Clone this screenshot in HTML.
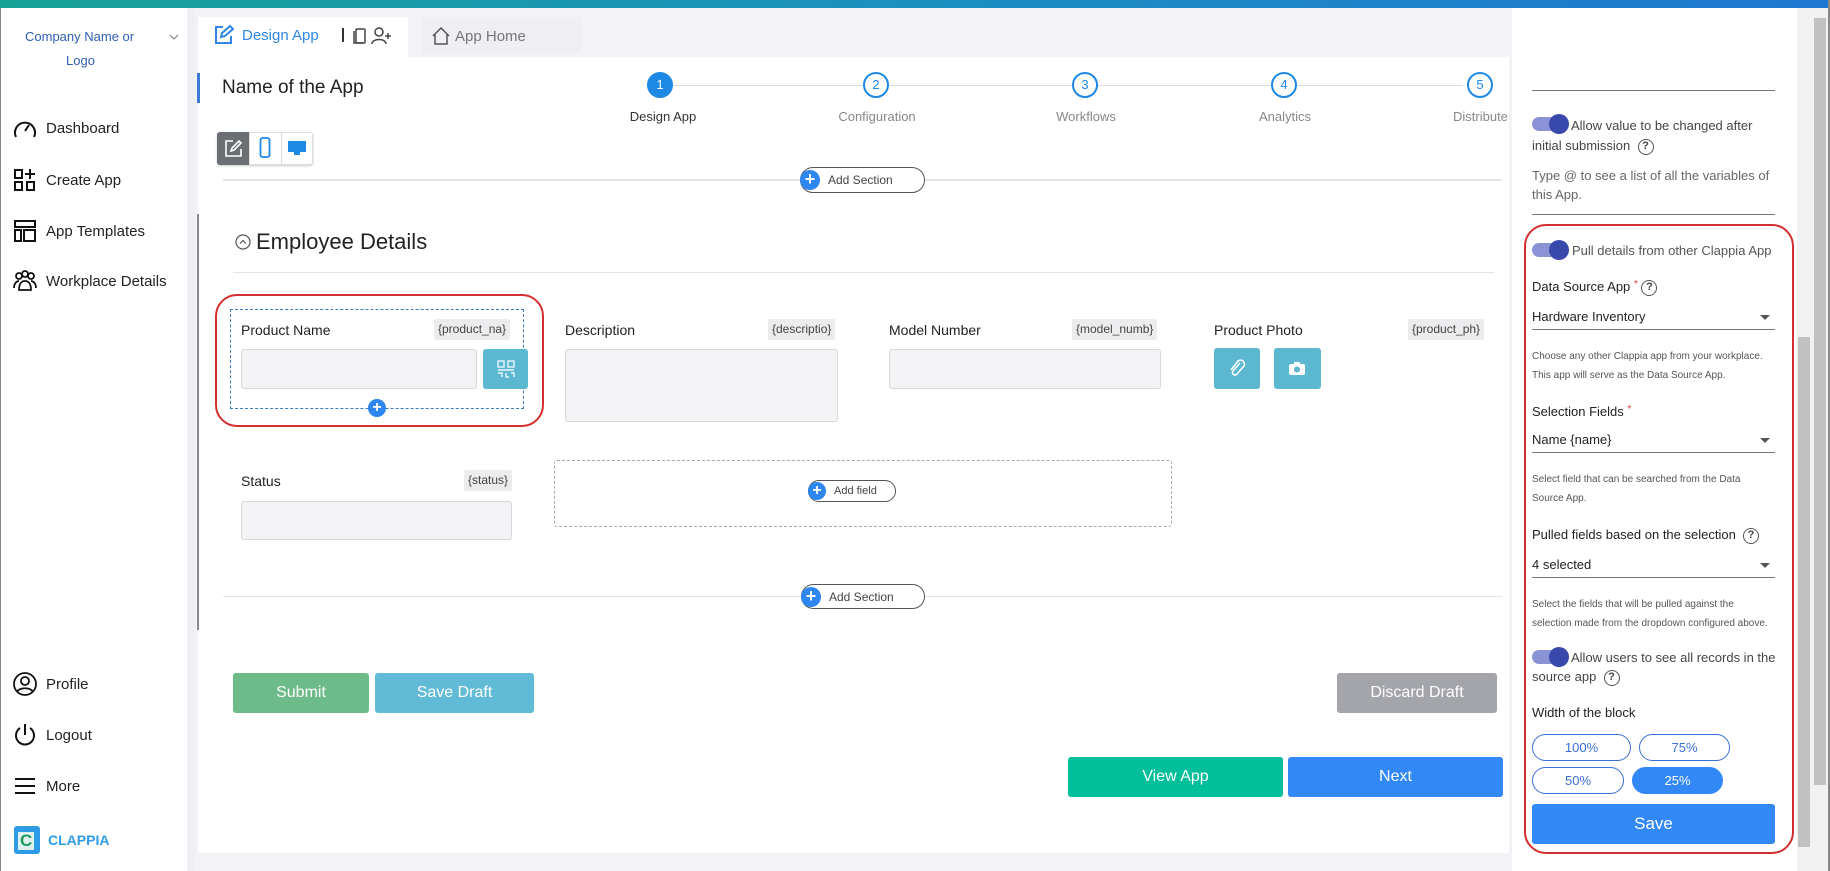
<!DOCTYPE html>
<html><head><meta charset="utf-8"><style>
*{box-sizing:border-box;margin:0;padding:0}
body{width:1830px;height:871px;overflow:hidden;position:relative;background:#f3f3f7;font-family:"Liberation Sans",Arial,sans-serif;color:#222}
.a{position:absolute}
.t{position:absolute;white-space:nowrap}
.nav{position:absolute;left:12px;font-size:15px;color:#222;display:flex;align-items:center}
.nav svg{width:26px;height:26px;margin-right:8px}
.tok{position:absolute;background:#ececee;color:#444;font-size:12px;height:21px;line-height:21px;padding:0 4px;border-radius:2px}
.inp{position:absolute;background:#f3f2f4;border:1px solid #d8d8db;border-radius:3px}
.lbl{position:absolute;font-size:14px;color:#222}
.btn{position:absolute;color:#fff;font-size:16px;text-align:center;border-radius:3px}
.pill{position:absolute;border:1px solid #555;border-radius:14px;background:#fff;font-size:12px;color:#444;display:flex;align-items:center}
.pill i{display:inline-block;width:20px;height:20px;border-radius:50%;background:#2e86f0;color:#fff;font-style:normal;font-weight:bold;font-size:18px;line-height:19px;text-align:center;margin:0 8px 0 -1px}
.step{position:absolute;width:26px;height:26px;border-radius:50%;border:2px solid #1e88e5;background:#fff;color:#1e88e5;font-size:13px;text-align:center;line-height:22px}
.slbl{position:absolute;font-size:13px;color:#888;transform:translateX(-50%);white-space:nowrap}
.tg{position:absolute;width:36px;height:14px;border-radius:7px;background:#8a93d6}
.tg:after{content:"";position:absolute;right:-1px;top:-3px;width:20px;height:20px;border-radius:50%;background:#3949ab}
.q{display:inline-block;width:16px;height:16px;border:1.5px solid #555;border-radius:50%;font-size:11px;text-align:center;line-height:13px;color:#444;font-weight:bold;vertical-align:middle}
.pt{position:absolute;left:1532px;font-size:13px;color:#222}
.hp{position:absolute;left:1532px;font-size:10px;color:#555;line-height:19px}
.ul{position:absolute;left:1532px;width:243px;height:1px;background:#777}
.car{position:absolute;left:1760px;width:0;height:0;border-left:5px solid transparent;border-right:5px solid transparent;border-top:5px solid #555}
.wp{position:absolute;height:27px;border:1px solid #3a6fd8;border-radius:14px;color:#3a6fd8;font-size:13px;text-align:center;line-height:25px}
</style></head><body>
<div class="a" style="left:0;top:0;width:1830px;height:8px;background:linear-gradient(90deg,#17a396,#1c8fc0 50%,#1f78d2)"></div>
<!-- sidebar -->
<div class="a" style="left:0;top:8px;width:187px;height:863px;background:#fff;border-left:1px solid #888"></div>
<div class="a" style="left:187px;top:8px;width:8px;height:863px;background:#efeff3"></div>
<div class="t" style="left:25px;top:29px;font-size:13px;color:#2f5fb3">Company Name or</div>
<div class="t" style="left:66px;top:53px;font-size:13px;color:#2f5fb3">Logo</div>
<svg class="a" style="left:169px;top:34px" width="10" height="7"><path d="M1 1l4 4 4-4" stroke="#777" fill="none"/></svg>
<div class="nav" style="top:115px"><svg viewBox="0 0 26 26" fill="none" stroke="#111" stroke-width="2"><path d="M4 22A10 10 0 1 1 22 22"/><path d="M13 16l4-6"/></svg>Dashboard</div>
<div class="nav" style="top:167px"><svg viewBox="0 0 26 26" fill="none" stroke="#111" stroke-width="2"><rect x="3" y="3" width="7" height="8"/><rect x="3" y="15" width="7" height="8"/><rect x="15" y="15" width="7" height="8"/><path d="M18 2v10M13 7h10"/></svg>Create App</div>
<div class="nav" style="top:218px"><svg viewBox="0 0 26 26" fill="none" stroke="#111" stroke-width="2"><rect x="3" y="3" width="20" height="6"/><rect x="3" y="12" width="6" height="11"/><rect x="12" y="12" width="11" height="11"/></svg>App Templates</div>
<div class="nav" style="top:268px"><svg viewBox="0 0 26 26" fill="none" stroke="#111" stroke-width="1.8"><circle cx="7" cy="8" r="3"/><circle cx="13" cy="6" r="3"/><circle cx="19" cy="8" r="3"/><path d="M2 20c0-5 3-7 5-7M24 20c0-5-3-7-5-7M7 22c0-7 3-9 6-9s6 2 6 9z"/></svg>Workplace Details</div>
<div class="nav" style="top:671px"><svg viewBox="0 0 26 26" fill="none" stroke="#111" stroke-width="1.8"><circle cx="13" cy="13" r="11"/><circle cx="13" cy="10" r="4"/><path d="M5 21c2-5 14-5 16 0"/></svg>Profile</div>
<div class="nav" style="top:722px"><svg viewBox="0 0 26 26" fill="none" stroke="#111" stroke-width="2"><path d="M8 6a9 9 0 1 0 10 0M13 2v11"/></svg>Logout</div>
<div class="nav" style="top:773px"><svg viewBox="0 0 26 26" fill="none" stroke="#111" stroke-width="2"><path d="M3 6h20M3 13h20M3 20h20"/></svg>More</div>
<div class="a" style="left:14px;top:826px;width:26px;height:28px;background:#2e9be6;border-radius:3px"></div>
<div class="t" style="left:18px;top:832px;font-size:17px;font-weight:bold;color:#1d9b5f;background:#dff1ee;padding:0 2px;line-height:18px">C</div>
<div class="t" style="left:48px;top:832px;font-size:14px;font-weight:bold;color:#2e9be6">CLAPPIA</div>
<!-- tabs -->
<div class="a" style="left:198px;top:17px;width:210px;height:40px;background:#fff"></div>
<svg class="a" style="left:212px;top:24px" width="22" height="22" viewBox="0 0 22 22" fill="none" stroke="#2f86e6" stroke-width="2"><path d="M11 3H4v16h15v-7"/><path d="M9 13l1-4 8-7 3 3-8 7z"/></svg>
<div class="t" style="left:242px;top:27px;font-size:15px;color:#2f86e6">Design App</div>
<div class="a" style="left:342px;top:28px;width:2px;height:14px;background:#333"></div>
<svg class="a" style="left:353px;top:26px" width="42" height="20" fill="none" stroke="#444" stroke-width="1.5"><rect x="3" y="3" width="9" height="14" rx="1"/><path d="M1 5v12h9"/><circle cx="26" cy="6" r="4"/><path d="M19 18c0-6 14-6 14 0M35 7v6M32 10h6"/></svg>
<div class="a" style="left:422px;top:17px;width:159px;height:36px;background:#efeff3"></div>
<svg class="a" style="left:431px;top:26px" width="20" height="20" fill="none" stroke="#555" stroke-width="1.5"><path d="M2 10l8-8 8 8M4 8v10h12V8"/></svg>
<div class="t" style="left:455px;top:28px;font-size:15px;color:#777">App Home</div>
<!-- main card -->
<div class="a" style="left:198px;top:57px;width:1311px;height:796px;background:#fff"></div>
<div class="a" style="left:197px;top:73px;width:3px;height:30px;background:#3a7bd5"></div>
<div class="a" style="left:197px;top:214px;width:2px;height:416px;background:#8a8a8a"></div>
<div class="t" style="left:222px;top:77px;font-size:19px;color:#222">Name of the App</div>
<div class="a" style="left:673px;top:85px;width:790px;height:1px;background:#ddd"></div>
<div class="step" style="left:647px;top:72px;background:#1e88e5;color:#fff">1</div>
<div class="step" style="left:863px;top:72px">2</div>
<div class="step" style="left:1072px;top:72px">3</div>
<div class="step" style="left:1271px;top:72px">4</div>
<div class="step" style="left:1467px;top:72px">5</div>
<div class="slbl" style="left:663px;top:109px;color:#333">Design App</div>
<div class="slbl" style="left:877px;top:109px">Configuration</div>
<div class="slbl" style="left:1086px;top:109px">Workflows</div>
<div class="slbl" style="left:1285px;top:109px">Analytics</div>
<div class="t" style="left:1453px;top:109px;font-size:13px;color:#888;width:56px;overflow:hidden">Distribute</div>
<div class="a" style="left:217px;top:132px;width:96px;height:33px;border:1px solid #ddd;border-radius:3px;background:#fff;box-shadow:0 1px 2px #ccc"></div>
<div class="a" style="left:217px;top:132px;width:32px;height:33px;background:#6b6e72;border-radius:3px 0 0 3px"></div>
<svg class="a" style="left:224px;top:139px" width="19" height="19" fill="none" stroke="#fff" stroke-width="1.6"><path d="M9 2H2v15h15V10"/><path d="M7 12l1-3 7-7 2 2-7 7z"/></svg>
<div class="a" style="left:249px;top:132px;width:1px;height:33px;background:#ddd"></div>
<div class="a" style="left:281px;top:132px;width:1px;height:33px;background:#ddd"></div>
<svg class="a" style="left:259px;top:137px" width="12" height="22" fill="none" stroke="#1e88e5" stroke-width="1.8"><rect x="1.5" y="1" width="9" height="19" rx="2"/></svg>
<svg class="a" style="left:287px;top:140px" width="20" height="17"><rect x="1" y="1" width="18" height="11" fill="#1e88e5"/><rect x="7" y="12" width="6" height="3" fill="#1e88e5"/></svg>
<div class="a" style="left:223px;top:179px;width:1279px;height:2px;background:#e4e4e8"></div>
<div class="pill" style="left:800px;top:167px;width:125px;height:26px"><i>+</i>Add Section</div>
<svg class="a" style="left:235px;top:234px" width="16" height="16" fill="none" stroke="#555" stroke-width="1.2"><circle cx="8" cy="8" r="7"/><path d="M5 9.5l3-3 3 3"/></svg>
<div class="t" style="left:256px;top:229px;font-size:22px;color:#222">Employee Details</div>
<div class="a" style="left:233px;top:272px;width:1261px;height:1px;background:#e4e4e8"></div>
<!-- fields -->
<div class="a" style="left:215px;top:294px;width:329px;height:133px;border:2px solid #d32f2f;border-radius:22px"></div>
<div class="a" style="left:230px;top:309px;width:294px;height:100px;border:1px dashed #3a7bbf"></div>
<div class="lbl" style="left:241px;top:322px">Product Name</div>
<div class="tok" style="left:434px;top:319px">{product_na}</div>
<div class="inp" style="left:241px;top:349px;width:236px;height:40px"></div>
<div class="a" style="left:483px;top:349px;width:45px;height:40px;background:#5bb8d0;border-radius:3px"></div>
<svg class="a" style="left:497px;top:360px" width="18" height="18" fill="none" stroke="#e8f6fa" stroke-width="1.4"><rect x="1" y="1" width="6" height="6"/><rect x="11" y="1" width="6" height="6"/><path d="M1 10h16M1 13h4v4M9 13v4h3M14 13h3v4"/></svg>
<div class="a" style="left:368px;top:399px;width:18px;height:18px;border-radius:50%;background:#2e86f0;color:#fff;font-weight:bold;text-align:center;line-height:17px;font-size:16px">+</div>
<div class="lbl" style="left:565px;top:322px">Description</div>
<div class="tok" style="left:768px;top:319px">{descriptio}</div>
<div class="inp" style="left:565px;top:349px;width:273px;height:73px"></div>
<div class="lbl" style="left:889px;top:322px">Model Number</div>
<div class="tok" style="left:1072px;top:319px">{model_numb}</div>
<div class="inp" style="left:889px;top:349px;width:272px;height:40px"></div>
<div class="lbl" style="left:1214px;top:322px">Product Photo</div>
<div class="tok" style="left:1408px;top:319px">{product_ph}</div>
<div class="a" style="left:1214px;top:348px;width:46px;height:41px;background:#5bb8d0;border-radius:3px"></div>
<svg class="a" style="left:1228px;top:359px" width="18" height="20" fill="none" stroke="#fff" stroke-width="1.6"><path d="M12 4L5 12a2.5 2.5 0 0 0 4 3l7-8a4 4 0 0 0-6-5L3 11"/></svg>
<div class="a" style="left:1274px;top:348px;width:47px;height:41px;background:#5bb8d0;border-radius:3px"></div>
<svg class="a" style="left:1288px;top:361px" width="18" height="15"><rect x="1" y="3" width="16" height="11" rx="2" fill="#fff"/><rect x="6" y="1" width="6" height="3" fill="#fff"/><circle cx="9" cy="8.5" r="3" fill="#5bb8d0"/></svg>
<div class="lbl" style="left:241px;top:473px">Status</div>
<div class="tok" style="left:464px;top:470px">{status}</div>
<div class="inp" style="left:241px;top:501px;width:271px;height:39px"></div>
<div class="a" style="left:554px;top:460px;width:618px;height:67px;border:1px dashed #aaa;border-radius:3px"></div>
<div class="pill" style="left:808px;top:480px;width:88px;height:22px;font-size:11px"><i style="width:18px;height:18px;font-size:16px;line-height:17px">+</i>Add field</div>
<div class="a" style="left:223px;top:596px;width:1279px;height:1px;background:#e4e4e8"></div>
<div class="pill" style="left:801px;top:584px;width:124px;height:25px"><i>+</i>Add Section</div>
<div class="btn" style="left:233px;top:673px;width:136px;height:40px;line-height:40px;background:#6dbb88">Submit</div>
<div class="btn" style="left:375px;top:673px;width:159px;height:40px;line-height:40px;background:#62bbd6">Save Draft</div>
<div class="btn" style="left:1337px;top:673px;width:160px;height:40px;line-height:40px;background:#a3a5aa">Discard Draft</div>
<div class="btn" style="left:1068px;top:757px;width:215px;height:40px;line-height:40px;background:#00bf9a">View App</div>
<div class="btn" style="left:1288px;top:757px;width:215px;height:40px;line-height:40px;background:#3388f7">Next</div>
<!-- right panel -->
<div class="a" style="left:1512px;top:8px;width:285px;height:863px;background:#fff"></div>
<div class="ul" style="top:90px"></div>
<div class="tg" style="left:1532px;top:117px"></div>
<div class="t" style="left:1571px;top:118px;font-size:13px;color:#444">Allow value to be changed after</div>
<div class="t" style="left:1532px;top:138px;font-size:13px;color:#444">initial submission &nbsp;<span class="q">?</span></div>
<div class="t" style="left:1532px;top:168px;font-size:13px;color:#666">Type @ to see a list of all the variables of</div>
<div class="t" style="left:1532px;top:187px;font-size:13px;color:#666">this App.</div>
<div class="ul" style="top:214px"></div>
<div class="a" style="left:1524px;top:224px;width:270px;height:630px;border:2px solid #d32f2f;border-radius:22px"></div>
<div class="tg" style="left:1532px;top:243px"></div>
<div class="t" style="left:1572px;top:243px;font-size:13px;color:#555">Pull details from other Clappia App</div>
<div class="pt" style="top:279px">Data Source App <span style="color:#d33;font-size:10px;vertical-align:top">*</span> <span class="q">?</span></div>
<div class="pt" style="top:309px">Hardware Inventory</div>
<div class="car" style="top:315px"></div>
<div class="ul" style="top:329px"></div>
<div class="hp" style="top:347px">Choose any other Clappia app from your workplace.<br>This app will serve as the Data Source App.</div>
<div class="pt" style="top:404px">Selection Fields <span style="color:#d33;font-size:10px;vertical-align:top">*</span></div>
<div class="pt" style="top:432px">Name {name}</div>
<div class="car" style="top:438px"></div>
<div class="ul" style="top:452px"></div>
<div class="hp" style="top:470px">Select field that can be searched from the Data<br>Source App.</div>
<div class="pt" style="top:527px">Pulled fields based on the selection &nbsp;<span class="q">?</span></div>
<div class="pt" style="top:557px">4 selected</div>
<div class="car" style="top:563px"></div>
<div class="ul" style="top:577px"></div>
<div class="hp" style="top:595px">Select the fields that will be pulled against the<br>selection made from the dropdown configured above.</div>
<div class="tg" style="left:1532px;top:650px"></div>
<div class="t" style="left:1571px;top:650px;font-size:13px;color:#444">Allow users to see all records in the</div>
<div class="t" style="left:1532px;top:669px;font-size:13px;color:#444">source app &nbsp;<span class="q">?</span></div>
<div class="pt" style="top:705px">Width of the block</div>
<div class="wp" style="left:1532px;top:734px;width:99px">100%</div>
<div class="wp" style="left:1639px;top:734px;width:91px">75%</div>
<div class="wp" style="left:1532px;top:767px;width:92px">50%</div>
<div class="wp" style="left:1632px;top:767px;width:91px;background:#3388f7;border-color:#3388f7;color:#fff">25%</div>
<div class="btn" style="left:1532px;top:804px;width:243px;height:40px;line-height:40px;background:#3388f7;font-size:17px">Save</div>
<!-- scrollbars -->
<div class="a" style="left:1797px;top:8px;width:14px;height:863px;background:#f1f1f1"></div>
<div class="a" style="left:1798px;top:337px;width:12px;height:510px;background:#c1c1c1"></div>
<div class="a" style="left:1812px;top:8px;width:16px;height:863px;background:#f1f1f1"></div>
<div class="a" style="left:1814px;top:18px;width:12px;height:767px;background:#c1c1c1"></div>
<div class="a" style="left:1828px;top:0;width:2px;height:871px;background:#888"></div>
</body></html>
